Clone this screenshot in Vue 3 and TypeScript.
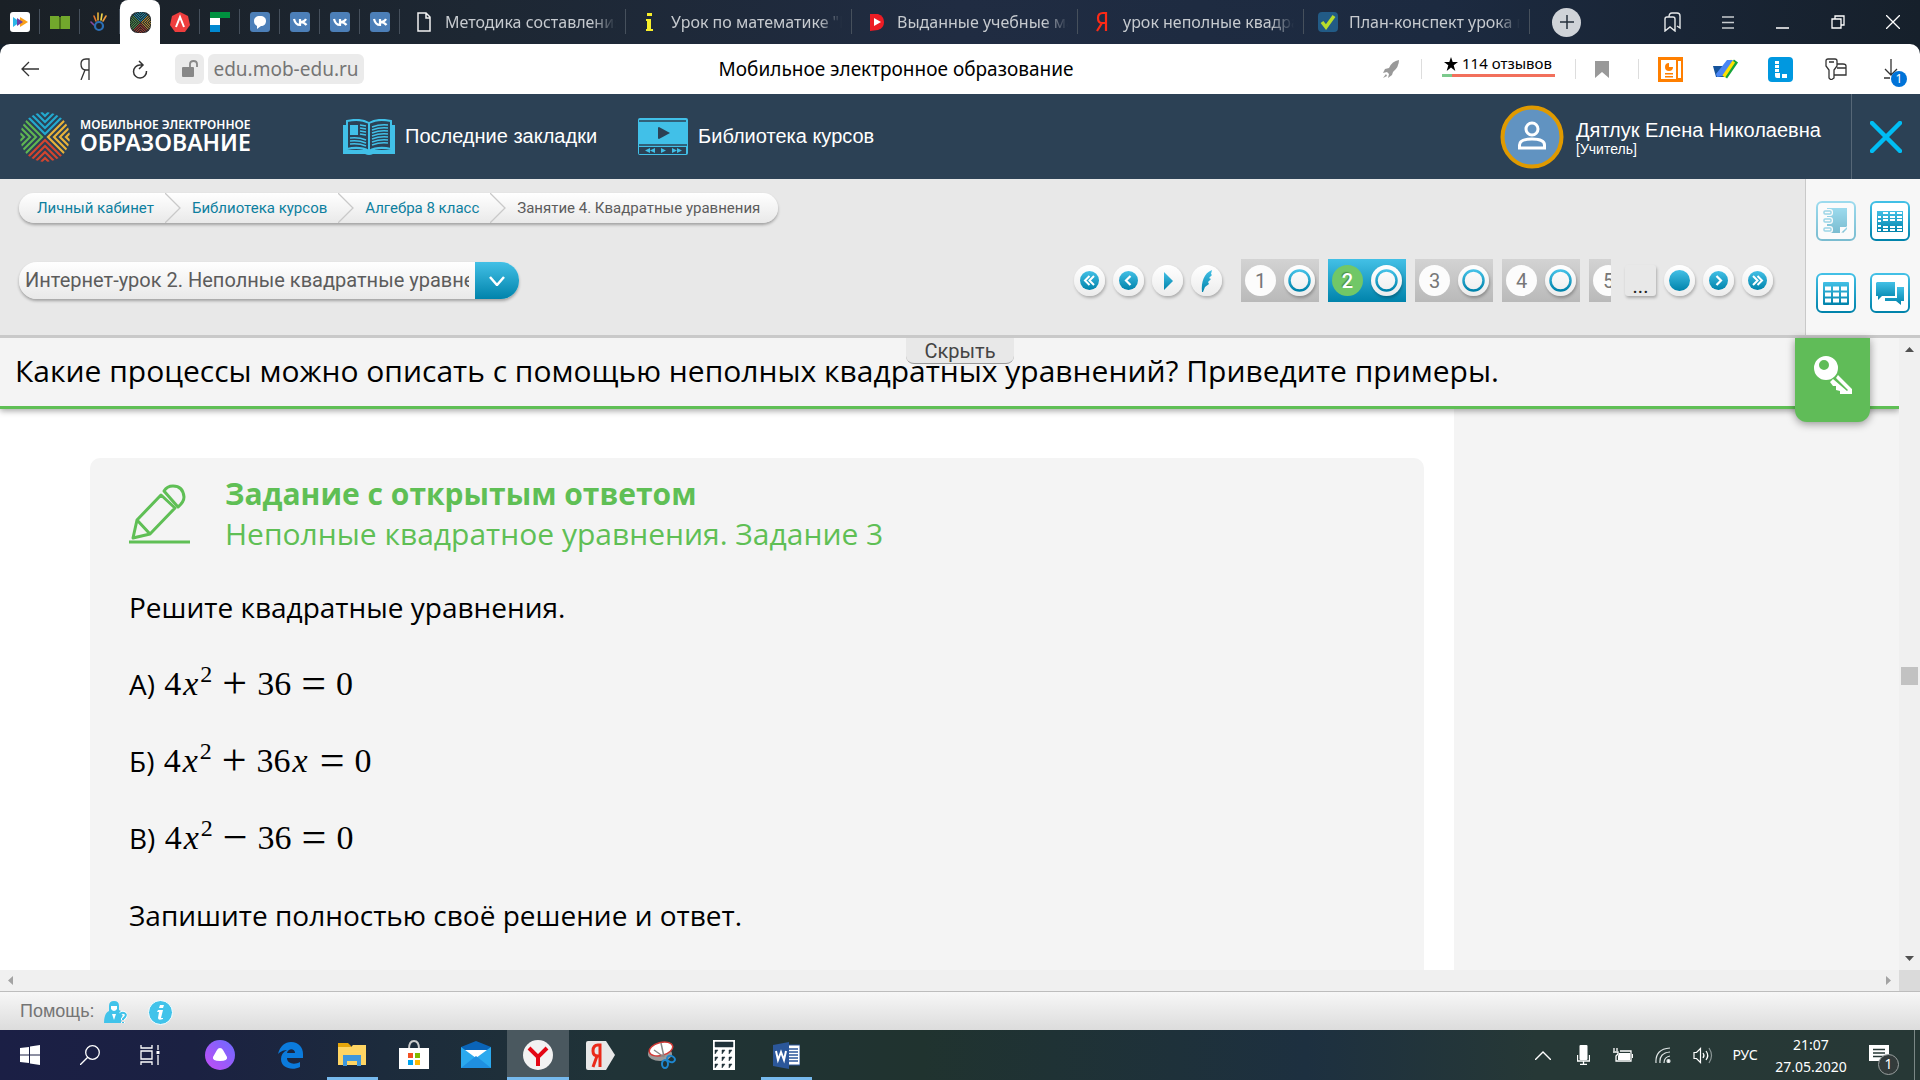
<script setup lang="ts">
import { ref } from 'vue'

interface Token {
  text: string
  kind: 'num' | 'var' | 'sup' | 'op'
}

interface Equation {
  label: string
  tokens: Token[]
}

const num = (text: string): Token => ({ text, kind: 'num' })
const variable = (text: string): Token => ({ text, kind: 'var' })
const sup = (text: string): Token => ({ text, kind: 'sup' })
const op = (text: string): Token => ({ text, kind: 'op' })

const equations: Equation[] = [
  { label: 'А)', tokens: [num('4'), variable('x'), sup('2'), op('+'), num('36'), op('='), num('0')] },
  { label: 'Б)', tokens: [num('4'), variable('x'), sup('2'), op('+'), num('36'), variable('x'), op('='), num('0')] },
  { label: 'В)', tokens: [num('4'), variable('x'), sup('2'), op('−'), num('36'), op('='), num('0')] },
]

const tabs = [
  { id: 'doc', title: 'Методика составления' },
  { id: 'info', title: 'Урок по математике "Неполные' },
  { id: 'video', title: 'Выданные учебные материалы' },
  { id: 'ya', title: 'урок неполные квадратные' },
  { id: 'check', title: 'План-конспект урока по теме' },
]

const crumbs = ['Личный кабинет', 'Библиотека курсов', 'Алгебра 8 класс']
const pages = [1, 2, 3, 4, 5]
const currentPage = ref(2)
const lesson = ref('2')
const rayApexes = [22, 16, 10, 4]
const logoSides = [
  { angle: 0, color: '#23a9cf' },
  { angle: 90, color: '#e8b23a' },
  { angle: 180, color: '#d3452f' },
  { angle: 270, color: '#5fb552' },
]
</script>

<template>
  <div class="screen">
    <svg class="defs" width="0" height="0" aria-hidden="true">
      <defs>
        <linearGradient id="blue" x1="0" y1="0" x2="0" y2="1">
          <stop offset="0" stop-color="#43c0e6" />
          <stop offset="1" stop-color="#0083ab" />
        </linearGradient>
        <linearGradient id="alice" x1="0" y1="1" x2="1" y2="0">
          <stop offset="0" stop-color="#c44df5" />
          <stop offset="1" stop-color="#6a6bff" />
        </linearGradient>
        <symbol id="emblem" viewBox="0 0 50 50">
          <clipPath id="emblem-clip"><circle cx="25" cy="25" r="25" /></clipPath>
          <g clip-path="url(#emblem-clip)" fill="none" stroke-width="2.2">
            <g v-for="side in logoSides" :key="side.angle" :stroke="side.color" :transform="`rotate(${side.angle} 25 25)`">
              <path v-for="apex in rayApexes" :key="apex" :d="`M${25 - apex} 0 L25 ${apex} L${25 + apex} 0`" />
            </g>
          </g>
        </symbol>
      </defs>
    </svg>

    <header class="tabs">
      <button class="pin" aria-label="Видео">
        <svg width="20" height="20" viewBox="0 0 20 20"><rect width="20" height="20" rx="3" fill="#fff" /><path d="M3 5l7 5-7 5z" fill="#29b6e8" /><path d="M10 5l8 5-8 5z" fill="#f9a01b" /><path d="M7 6l6 4-6 4z" fill="#6b3fa8" /></svg>
      </button>
      <button class="pin" aria-label="Учебник">
        <svg width="20" height="20" viewBox="0 0 20 20"><path d="M0 4h9v13H0zM11 4h9v13h-9z" fill="#72a82c" /><path d="M9 5h2v12H9z" fill="#4c7519" /></svg>
      </button>
      <button class="pin" aria-label="Рука">
        <svg width="20" height="20" viewBox="0 0 20 20" fill="none" stroke-width="1.600" stroke-linecap="round"><path d="M6 9L4 4" stroke="#e5762c" /><path d="M8 8V1" stroke="#e9b53b" /><path d="M11 8l1-6" stroke="#f2d64b" /><path d="M13 9l3-5" stroke="#ef9a3f" /><path d="M4 13l-3-3" stroke="#8a4a9d" /><ellipse cx="9" cy="14" rx="4" ry="4" stroke="#2c6fb5" stroke-width="2.200" /></svg>
      </button>
      <button class="pin active" aria-label="Мобильное электронное образование">
        <svg width="21" height="21" viewBox="0 0 50 50"><rect width="50" height="50" rx="18" fill="#20262b" /><use href="#emblem" width="50" height="50" /></svg>
      </button>
      <button class="pin" aria-label="А">
        <svg width="20" height="20" viewBox="0 0 20 20"><path d="M10 0l8 4 2 9-5 7H5l-5-7 2-9z" fill="#ee3d3d" /><path d="M6 15l4-10 4 10" fill="none" stroke="#fff" stroke-width="2" /></svg>
      </button>
      <button class="pin" aria-label="Портал">
        <svg width="20" height="20" viewBox="0 0 20 20"><path d="M0 0h20v6H0z" fill="#00923f" /><path d="M0 6h10v7H0z" fill="#fff" /><path d="M0 13h10v7H0z" fill="#0088d1" /></svg>
      </button>
      <button class="pin" aria-label="Сообщения">
        <svg width="20" height="20" viewBox="0 0 20 20"><rect width="20" height="20" rx="3" fill="#4c7fb8" /><path d="M10 4c4 0 6 2 6 5s-2 5-5 5l-4 3v-3c-2-1-3-3-3-5 0-3 2-5 6-5z" fill="#fff" /></svg>
      </button>
      <button v-for="n in 3" :key="n" class="pin" aria-label="ВКонтакте">
        <svg width="20" height="20" viewBox="0 0 20 20"><rect width="20" height="20" rx="3" fill="#4c7fb8" /><path d="M4 7c1 4 3 6 6 6V7M16 7c-1 2-3 3-6 3 3 0 5 1 6.500 3" fill="none" stroke="#fff" stroke-width="2.200" /></svg>
      </button>
      <button v-for="tab in tabs" :key="tab.id" class="tab">
        <svg width="22" height="22" viewBox="0 0 22 22">
          <template v-if="tab.id === 'doc'"><path d="M5 2h8l4 4v14H5zM13 2v5h4" fill="none" stroke="#f1f1f1" stroke-width="1.500" /></template>
          <template v-if="tab.id === 'info'"><path d="M8 2h5v3H8zM7 8h5v10h2v2H7v-2h1v-8H7z" fill="#f7ee2a" /></template>
          <template v-if="tab.id === 'video'"><path d="M5 3h8q6 2 6 8t-6 8l-8 1z" fill="#ed1c24" /><path d="M9 7l7 4-7 4z" fill="#fff" /></template>
          <template v-if="tab.id === 'ya'"><path d="M15 20V2h-3C8 2 7 4 7 7c0 4 2 5 4 5h4M11 12L6 20" fill="none" stroke="#fc2a16" stroke-width="2.200" /></template>
          <template v-if="tab.id === 'check'"><rect x="1" y="1" width="20" height="20" rx="4" fill="#225b86" /><path d="M5 11l4 5 8-11" fill="none" stroke="#b8dc2b" stroke-width="3.500" /></template>
        </svg>
        <span>{{ tab.title }}</span>
      </button>
      <div class="plus-cell">
        <button class="plus" aria-label="Новая вкладка"><svg width="14" height="14" viewBox="0 0 14 14"><path d="M7 0v14M0 7h14" stroke="#26303b" stroke-width="1.500" /></svg></button>
      </div>
      <div class="window-controls">
        <button aria-label="Закладки"><svg width="18" height="20" viewBox="0 0 18 20" fill="none" stroke="#e6e8ea" stroke-width="1.400"><path d="M1 7q0-2 2-2h6q2 0 2 2v12l-5-4-5 4zM5 5q0-4 3-4h5q3 0 3 3v12l-3-2" /></svg></button>
        <button aria-label="Меню"><svg width="12" height="13" viewBox="0 0 12 13"><path d="M0 1h12M0 6.500h12M0 12h12" stroke="#c8ccd0" stroke-width="1.500" /></svg></button>
        <button aria-label="Свернуть"><svg width="13" height="14" viewBox="0 0 13 14"><path d="M0 13h13" stroke="#fff" stroke-width="1.500" /></svg></button>
        <button aria-label="Окно"><svg width="14" height="14" viewBox="0 0 14 14" fill="none" stroke="#fff" stroke-width="1.300"><path d="M1 4h9v9H1zM4 4V1h9v9h-3" /></svg></button>
        <button aria-label="Закрыть"><svg width="14" height="14" viewBox="0 0 14 14"><path d="M0 0l14 14M14 0L0 14" stroke="#fff" stroke-width="1.300" /></svg></button>
      </div>
    </header>

    <div class="address">
      <div class="bar">
        <button class="nav" aria-label="Назад"><svg width="18" height="16" viewBox="0 0 18 16" fill="none" stroke="#333" stroke-width="1.300"><path d="M18 8H1M8 1L1 8l7 7" /></svg></button>
        <button class="nav" aria-label="Яндекс"><svg width="10" height="22" viewBox="0 0 10 22" fill="none" stroke="#333" stroke-width="1.300"><path d="M9 22V1H6C2 1 1 3 1 6s1 6 5 6h3M5 12L1 22" /></svg></button>
        <button class="nav" aria-label="Обновить"><svg width="16" height="19" viewBox="0 0 16 19" fill="none" stroke="#333" stroke-width="1.500"><path d="M14.500 11A6.500 6.500 0 1 1 8 5h3M7 1l4 4-4 4" /></svg></button>
        <button class="lock" aria-label="Соединение"><svg width="18" height="18" viewBox="0 0 18 18"><rect x="1" y="7" width="12" height="10" rx="1" fill="#888" /><path d="M9 8V4q0-3 3.500-3T16 4v3" fill="none" stroke="#888" stroke-width="1.800" /></svg></button>
        <button class="url">edu.mob-edu.ru</button>
        <div class="page-title">Мобильное электронное образование</div>
        <button class="rocket" aria-label="Турбо"><svg width="16" height="18" viewBox="0 0 16 18" fill="#999"><path d="M16 0q-7 1-10 8L2 9l-2 4 4-1 2 2-1 4 4-3 1-3q6-5 6-12zM3 14l-3 4 4-2z" /></svg></button>
        <a class="reviews" href="#"><svg width="14" height="14" viewBox="0 0 14 14"><path d="M7 0l1.700 5H14L9.700 8.200 11.300 14 7 10.600 2.700 14l1.600-5.800L0 5h5.300z" /></svg><span>114 отзывов</span></a>
        <button class="mark" aria-label="В закладки"><svg width="14" height="17" viewBox="0 0 14 17"><path d="M0 0h14v17l-7-6-7 6z" fill="#999" /></svg></button>
        <div class="extensions">
          <button aria-label="Презентация"><svg width="25" height="25" viewBox="0 0 25 25"><rect width="25" height="25" fill="#ff7f00" /><path d="M3 3h15v19H3zM20 4h3v17h-3z" fill="#fff" /><path d="M11 6a4 4 0 1 0 4 4h-4zM7 16h8v1.500H7zM7 19h8v1.500H7z" fill="#ff7f00" /></svg></button>
          <button aria-label="Кисть"><svg width="26" height="20" viewBox="0 0 26 20"><path d="M0 7h12v11H3z" fill="#15539b" /><path d="M23 2L12 18" stroke="#16a43a" stroke-width="5" /><path d="M20 2L10 17" stroke="#ffe100" stroke-width="5" /><path d="M14 1h6L9 17l-5 1-1-3z" fill="#4a86f5" /></svg></button>
          <button aria-label="Линко"><svg width="25" height="25" viewBox="0 0 25 25"><rect width="25" height="25" rx="4" fill="#0098e0" /><path d="M7 4h4v3H7zM7 8h4v3H7zM7 12h4v3H7zM7 16h5v5H9q-2 0-2-2zM14 17h5v4h-5z" fill="#fff" /></svg></button>
          <button aria-label="Пароли"><svg width="22" height="22" viewBox="0 0 22 22" fill="none" stroke="#333" stroke-width="1.300"><path d="M1 3q0-2 2-2h7q2 0 2 2v5L9 12v8l-3 2-2-2v-8L1 8zM4 4h5M12 6h6q3 0 3 2v9H9M12 10h9" /></svg></button>
          <button class="download" aria-label="Загрузки"><svg width="16" height="20" viewBox="0 0 16 20" fill="none" stroke="#333" stroke-width="1.300"><path d="M8 0v16M2 10l6 6 6-6M1 19h6" /></svg><span class="badge">1</span></button>
        </div>
      </div>
    </div>

    <div class="site-head">
      <a class="logo" href="#">
        <svg width="50" height="50" viewBox="0 0 50 50"><use href="#emblem" width="50" height="50" /></svg>
        <span class="logo-text"><small>МОБИЛЬНОЕ ЭЛЕКТРОННОЕ</small><strong>ОБРАЗОВАНИЕ</strong></span>
      </a>
      <a class="head-link" href="#">
        <svg width="52" height="36" viewBox="0 0 52 36"><path d="M0 6h3v25h46V6h3v29H30q-4 2-8 0H0z" fill="#41c0e8" /><path d="M4 2Q17-1 26 4q9-5 22-2v28q-13-3-22 2-9-5-22-2z" fill="#2c4155" stroke="#41c0e8" stroke-width="2" /><path d="M26 4v28" stroke="#41c0e8" stroke-width="2" /><path d="M7 6h8v10H7z" fill="#41c0e8" /><path d="M17 6l6 1M17 9l6 1M17 12l6 1M17 15l6 1M7 19q9-1 16 2M7 22q9-1 16 2M7 25q9-1 16 2M29 8q8-3 16-2M29 11q8-3 16-2M29 14q8-3 16-2M29 17q8-3 16-2M29 20q8-3 16-2M29 23q8-3 16-2M29 26q8-3 16-2" fill="none" stroke="#41c0e8" stroke-width="1.400" /></svg>
        <span>Последние закладки</span>
      </a>
      <a class="head-link library" href="#">
        <svg width="50" height="37" viewBox="0 0 50 37"><rect width="50" height="37" rx="2" fill="#41c0e8" /><path d="M1 3h47M1 27h48" stroke="#2c4155" stroke-width="1.500" /><path d="M20 10q0-1 1-1l11 6-11 6q-1 0-1-1z" fill="#2c4155" /><rect x="1" y="29" width="47" height="7" fill="#2c4155" /><path d="M12 30v5l-5-2.500zM17 30v5l-5-2.500zM23 30v5l5-2.500zM34 30v5l5-2.500zM39 30v5l5-2.500z" fill="#41c0e8" /></svg>
        <span>Библиотека курсов</span>
      </a>
      <div class="user">
        <svg width="64" height="64" viewBox="0 0 64 64"><circle cx="32" cy="32" r="29.500" fill="#6193c1" stroke="#e09a00" stroke-width="4" /><g fill="none" stroke="#fff" stroke-width="3"><circle cx="32" cy="24" r="6" /><path d="M19.500 43v-3q0-6 12.500-6t12.500 6v3z" /></g></svg>
        <div class="user-text"><div class="user-name">Дятлук Елена Николаевна</div><div class="user-role">[Учитель]</div></div>
      </div>
      <button class="site-close" aria-label="Выйти"><svg width="32" height="32" viewBox="0 0 32 32"><path d="M2 2l28 28M30 2L2 30" stroke="#00bdf4" stroke-width="4.500" stroke-linecap="round" /></svg></button>
    </div>

    <div class="tools">
      <div class="tools-main">
        <nav class="crumbs">
          <template v-for="crumb in crumbs" :key="crumb">
            <a href="#">{{ crumb }}</a>
            <svg width="16" height="30" viewBox="0 0 16 30"><path d="M0 0l15 15L0 30" fill="none" stroke="#c9c9c9" stroke-width="1.300" /></svg>
          </template>
          <span>Занятие 4. Квадратные уравнения</span>
        </nav>
        <div class="tools-row">
          <div class="lesson">
            <select v-model="lesson" aria-label="Интернет-урок">
              <option value="2">Интернет-урок 2. Неполные квадратные уравнения</option>
            </select>
            <span class="lesson-arrow"><svg width="16" height="10" viewBox="0 0 16 10"><path d="M1 1l7 8 7-8" fill="none" stroke="#fff" stroke-width="2.500" /></svg></span>
          </div>
          <div class="pager">
            <button class="round" aria-label="В начало"><svg width="19" height="19" viewBox="0 0 19 19"><circle cx="9.500" cy="9.500" r="9.500" fill="url(#blue)" /><path d="M9.500 5L5 9.500l4.500 4.500M14 5L9.500 9.500 14 14" fill="none" stroke="#fff" stroke-width="2" /></svg></button>
            <button class="round" aria-label="Назад"><svg width="19" height="19" viewBox="0 0 19 19"><circle cx="9.500" cy="9.500" r="9.500" fill="url(#blue)" /><path d="M11.500 5L7 9.500l4.500 4.500" fill="none" stroke="#fff" stroke-width="2.200" /></svg></button>
            <button class="round" aria-label="Пуск"><svg width="10" height="18" viewBox="0 0 10 18"><path d="M1 0l9 9-9 9z" fill="url(#blue)" /></svg></button>
            <button class="round" aria-label="Перо"><svg width="12" height="22" viewBox="0 0 12 22"><path d="M11 0l-1 4 1 1-3 3 2 1-3 3 1 2-4 3-2 5H1C0 12 3 3 11 0z" fill="url(#blue)" /></svg></button>
            <div class="pages">
              <div v-for="page in pages" :key="page" class="page" :class="{ current: page === currentPage }">
                <button class="number" @click="currentPage = page">{{ page }}</button>
                <button class="round ring" :aria-label="`Блок ${page}`"><svg width="23" height="23" viewBox="0 0 23 23"><circle cx="11.500" cy="11.500" r="10" fill="none" stroke="url(#blue)" stroke-width="2.500" /></svg></button>
              </div>
            </div>
            <button class="more">...</button>
            <button class="round" aria-label="Текущий"><svg width="21" height="21" viewBox="0 0 21 21"><circle cx="10.500" cy="10.500" r="10.500" fill="url(#blue)" /></svg></button>
            <button class="round" aria-label="Вперёд"><svg width="19" height="19" viewBox="0 0 19 19"><circle cx="9.500" cy="9.500" r="9.500" fill="url(#blue)" /><path d="M7.500 5l4.500 4.500L7.500 14" fill="none" stroke="#fff" stroke-width="2.200" /></svg></button>
            <button class="round" aria-label="В конец"><svg width="19" height="19" viewBox="0 0 19 19"><circle cx="9.500" cy="9.500" r="9.500" fill="url(#blue)" /><path d="M5 5l4.500 4.500L5 14M9.500 5l4.500 4.500L9.500 14" fill="none" stroke="#fff" stroke-width="2" /></svg></button>
          </div>
        </div>
      </div>
      <aside class="side">
        <button class="faded" aria-label="Тетрадь"><svg width="40" height="40" viewBox="0 0 40 40"><rect x="1" y="1" width="38" height="38" rx="5" fill="#fff" stroke="url(#blue)" stroke-width="2" /><path d="M11 7h20v18l-6 7H11z" fill="url(#blue)" /><g fill="#fff" stroke="#fff" stroke-width="2"><rect x="7" y="9" width="9" height="5" rx="2" /><rect x="7" y="17" width="9" height="5" rx="2" /><rect x="7" y="26" width="9" height="5" rx="2" /></g><g fill="#fff" stroke="#43b5d8" stroke-width="1.500"><rect x="8" y="10" width="7" height="3" rx="1" /><rect x="8" y="18" width="7" height="3" rx="1" /><rect x="8" y="27" width="7" height="3" rx="1" /></g><path d="M24 33v-7h7z" fill="#fff" /><path d="M26 31l5-5v2l-4 4z" fill="url(#blue)" /></svg></button>
        <button aria-label="Журнал"><svg width="40" height="40" viewBox="0 0 40 40"><rect x="1" y="1" width="38" height="38" rx="5" fill="#fff" stroke="url(#blue)" stroke-width="2" /><path d="M7 10h26v21H7z" fill="url(#blue)" /><path d="M13 12h5M20 12h5M27 12h5M13 16h5M20 16h5M27 16h5M8 16h3M13 19h5M20 19h5M27 19h5M8 20h3M8 25h3M13 26h5M20 26h5M27 26h5M8 29h3M13 29h5M20 29h5M27 29h5" stroke="#fff" stroke-width="2" /></svg></button>
        <button aria-label="Расписание"><svg width="40" height="40" viewBox="0 0 40 40"><rect x="1" y="1" width="38" height="38" rx="5" fill="#fff" stroke="url(#blue)" stroke-width="2" /><rect x="7" y="9" width="26" height="23" rx="1" fill="url(#blue)" /><path d="M9 15.500h6M17 15.500h6M25 15.500h6M9 21.500h6M17 21.500h6M25 21.500h6M9 27.500h6M17 27.500h6M25 27.500h6" stroke="#fff" stroke-width="4" /></svg></button>
        <button aria-label="Чат"><svg width="40" height="40" viewBox="0 0 40 40"><rect x="1" y="1" width="38" height="38" rx="5" fill="#fff" stroke="url(#blue)" stroke-width="2" /><path d="M7 9h18v14H12l-4 4v-4H6V10z" fill="url(#blue)" /><path d="M27 14h7v14h-3v4l-5-4H15v-3h12z" fill="url(#blue)" /></svg></button>
      </aside>
    </div>

    <main class="workspace">
      <div class="view">
        <div class="question">Какие процессы можно описать с помощью неполных квадратных уравнений? Приведите примеры.</div>
        <div class="scroll-body">
          <div class="sheet">
            <section class="task">
              <div class="task-head">
                <svg width="62" height="62" viewBox="0 0 62 62" fill="none" stroke="#5fbf55" stroke-width="3" stroke-linejoin="round"><path d="M0 59h61" /><path d="M32 12l14 13-25 26-17 4 4-18zM8 37l13 14" /><path d="M35 8q3-5 9-5 10 0 11 11 0 5-6 10z" /></svg>
                <h2><b>Задание с открытым ответом</b><span>Неполные квадратное уравнения. Задание 3</span></h2>
              </div>
              <p>Решите квадратные уравнения.</p>
              <p v-for="eq in equations" :key="eq.label">{{ eq.label }} <span class="math"><span v-for="(token, i) in eq.tokens" :key="i" :class="token.kind">{{ token.text }}</span></span></p>
              <p>Запишите полностью своё решение и ответ.</p>
            </section>
          </div>
        </div>
      </div>
      <div class="v-scroll">
        <svg width="9" height="5" viewBox="0 0 9 5"><path d="M0 5l4.500-5L9 5z" fill="#505050" /></svg>
        <div class="track"><div class="thumb"></div></div>
        <svg width="9" height="5" viewBox="0 0 9 5"><path d="M0 0l4.500 5L9 0z" fill="#505050" /></svg>
      </div>
      <button class="hide">Скрыть</button>
      <button class="key" aria-label="Ключ"><svg width="40" height="40" viewBox="0 0 40 40"><path d="M13 1a12 12 0 1 0 0 24 12 12 0 0 0 0-24zM11 5a5 5 0 1 1 0 10 5 5 0 0 1 0-10z" fill="#fff" fill-rule="evenodd" /><path d="M25 20l14 14v5H27v-3l-4-1v-4h-3l-3-4 3-3 14 12 1-1-12-12z" fill="#fff" /></svg></button>
    </main>

    <div class="h-scroll">
      <svg width="5" height="9" viewBox="0 0 5 9"><path d="M5 0L0 4.500 5 9z" fill="#a3a3a3" /></svg>
      <svg class="to-right" width="5" height="9" viewBox="0 0 5 9"><path d="M0 0l5 4.500L0 9z" fill="#a3a3a3" /></svg>
      <div class="corner"></div>
    </div>

    <footer class="help">
      <span>Помощь:</span>
      <a href="#" aria-label="Поддержка"><svg width="24" height="25" viewBox="0 0 24 25"><path d="M5 10V6q0-5 5-5t5 5v4q3 1 4 3l-2 10H0q0-10 5-12z" fill="#41c3ea" /><path d="M7 6h6v3q-3 4-6 0zM8 14h4l-2 6z" fill="#fff" /><path d="M17 14q1-2 3-1t1 4l-2 2v1m0 2v1" fill="none" stroke="#fff" stroke-width="4" /><path d="M16 15q1-3 4-2t1 4l-2 2v1m0 2v1" fill="none" stroke="#41c3ea" stroke-width="2" /></svg></a>
      <a href="#" aria-label="Справка"><svg width="25" height="25" viewBox="0 0 25 25"><circle cx="12.500" cy="12.500" r="12" fill="#41c3ea" stroke="#fff" /><path d="M12 5h4l-1 3h-4zM10 10h5l-2 8h2v1q-5 2-5-1l1-6h-2z" fill="#fff" /></svg></a>
    </footer>

    <div class="taskbar">
      <button class="sys" aria-label="Пуск"><svg width="20" height="20" viewBox="0 0 20 20" fill="#fff"><path d="M0 3l9-1v7.500H0zM10 1.500L20 0v9.500H10zM0 10.500h9V18l-9-1zM10 10.500h10V20l-10-1.500z" /></svg></button>
      <button class="sys" aria-label="Поиск"><svg width="20" height="20" viewBox="0 0 20 20" fill="none" stroke="#fff" stroke-width="1.300"><circle cx="12.500" cy="7.500" r="6.800" /><path d="M8 12l-8 8" /></svg></button>
      <button class="sys" aria-label="Представление задач"><svg width="20" height="20" viewBox="0 0 20 20" fill="none" stroke="#fff" stroke-width="1.300"><path d="M1 0v3h11V0M1 20v-3h11v3M1 6h11v8H1zM18 0v5M18 10v10" /><path d="M18 6v3" stroke-width="3" /></svg></button>
      <button class="sys wide" aria-label="Алиса"><svg width="30" height="30" viewBox="0 0 30 30"><circle cx="15" cy="15" r="15" fill="url(#alice)" /><path d="M15 8q2 0 3 2l4 7q1 4-7 4t-7-4l4-7q1-2 3-2z" fill="#fff" /></svg></button>
      <button class="app" aria-label="Edge"><svg width="25" height="27" viewBox="0 0 25 27"><path d="M0 12C2 4 7 0 13 0c8 0 12 6 12 12v4H9c0 6 8 7 13 4v5c-8 4-19 1-19-8 0-4 2-7 6-9-5 0-8 3-9 4zM9 11h8c0-5-7-5-8 0z" fill="#0b7bdc" /></svg></button>
      <button class="app open" aria-label="Проводник"><svg width="28" height="24" viewBox="0 0 28 24"><path d="M0 0h10l3 3v4H0z" fill="#e5a50a" /><path d="M0 4h13l2-2h13v20H0z" fill="#ffd563" /><path d="M5 23V12h18v11h-4v-5h-10v5z" fill="#3e97dd" /></svg></button>
      <button class="app" aria-label="Магазин"><svg width="30" height="30" viewBox="0 0 30 30"><path d="M10 9q0-8 5-8t5 8" fill="none" stroke="#ccc" stroke-width="2" /><path d="M0 8h30v21H0z" fill="#fff" /><path d="M9 13h5v5H9z" fill="#f25022" /><path d="M16 13h5v5h-5z" fill="#7fba00" /><path d="M9 20h5v5H9z" fill="#00a4ef" /><path d="M16 20h5v5h-5z" fill="#ffb900" /></svg></button>
      <button class="app" aria-label="Почта"><svg width="30" height="28" viewBox="0 0 30 28"><path d="M0 6l15-6 15 6v21H0z" fill="#0a64b8" /><path d="M3 9h24v9H3z" fill="#fff" /><path d="M0 6l15 11L30 6v21H0z" fill="#2ba9ee" /><path d="M0 27l15-12 15 12z" fill="#1f8fe0" /></svg></button>
      <button class="app open selected" aria-label="Яндекс Браузер"><svg width="30" height="30" viewBox="0 0 30 30"><circle cx="15" cy="15" r="15" fill="#f2f2f2" /><path d="M6 8l9 9 9-9M15 16v10" fill="none" stroke="#e30613" stroke-width="4" /></svg></button>
      <button class="app" aria-label="Яндекс"><svg width="29" height="29" viewBox="0 0 29 29"><path d="M2 0h18l9 14-9 15H2q-2 0-2-2V2q0-2 2-2z" fill="#e8e8e8" /><path d="M14 26V4h-2c-4 0-5 3-5 6 0 4 2 5 5 5h2M11 15L7 26" fill="none" stroke="#ea2a1a" stroke-width="3" /></svg></button>
      <button class="app" aria-label="Ножницы"><svg width="28" height="28" viewBox="0 0 28 28"><ellipse cx="12" cy="13" rx="12" ry="7" fill="#999" /><ellipse cx="13" cy="8" rx="12" ry="6.500" transform="rotate(-15 13 8)" fill="#fff" stroke="#d23a36" stroke-width="1.500" /><path d="M13 2l3 14M6 9l10 7" stroke="#888" stroke-width="1.500" /><g fill="none" stroke="#1e87d0" stroke-width="2"><ellipse cx="23" cy="18" rx="4" ry="3" transform="rotate(20 23 18)" /><ellipse cx="17" cy="23" rx="3" ry="4" /></g></svg></button>
      <button class="app" aria-label="Калькулятор"><svg width="22" height="30" viewBox="0 0 22 30"><path d="M0 0h22v30H0z" fill="#fff" /><path d="M2 2h18v5H2zM2 10h3l-3 4zM9 10h3l-3 4zM16 10h3l-3 4zM2 17h3l-3 4zM9 17h3l-3 4zM16 17h3l-3 4zM2 24h3l-3 4zM9 24h3l-3 4zM16 24h3l-3 4z" fill="#20323a" stroke="#20323a" stroke-width=".500" /></svg></button>
      <button class="app open" aria-label="Word"><svg width="27" height="27" viewBox="0 0 27 27"><path d="M13 3h14v20H13z" fill="#fff" stroke="#2b579a" /><path d="M16 7h9M16 10h9M16 13h9M16 16h9M16 19h9" stroke="#2b579a" stroke-width="1.500" /><path d="M0 3l16-3v27L0 24z" fill="#2b579a" /><path d="M3 9l2 9 3-8 3 8 2-9" fill="none" stroke="#fff" stroke-width="2" /></svg></button>
      <div class="tray">
        <button aria-label="Скрытые значки"><svg width="16" height="9" viewBox="0 0 16 9"><path d="M0 9l8-8 8 8" fill="none" stroke="#fff" stroke-width="1.400" /></svg></button>
        <button aria-label="Микрофон"><svg width="13" height="20" viewBox="0 0 13 20"><rect x="2.500" width="8" height="15" rx="1" fill="#fff" /><path d="M.500 10v6h12v-6M6.500 16v3M3 19.300h7" fill="none" stroke="#fff" stroke-width="1.300" /></svg></button>
        <button aria-label="Батарея"><svg width="20" height="14" viewBox="0 0 20 14"><path d="M1 0v3M4 0v3M0 4h5v2L3 8v5h15V3H7" fill="none" stroke="#fff" stroke-width="1.300" /><path d="M6 5h11v7H5V8zM19 6h1v4h-1z" fill="#fff" /></svg></button>
        <button aria-label="Сеть"><svg width="16" height="16" viewBox="0 0 16 16" fill="none" stroke="#dfe5e5" stroke-width="1.200"><path d="M1 16Q0 2 15 1M5 16Q4 6 15 5M9 16q0-6 6-7" /><circle cx="13.500" cy="14" r="1.500" fill="#fff" /></svg></button>
        <button aria-label="Звук"><svg width="20" height="17" viewBox="0 0 20 17" fill="none" stroke="#fff" stroke-width="1.200"><path d="M1 5.500h2.500l4-4v14l-4-4H1zM10 6q2 2.500 0 5M13 4q3.500 4.500 0 9" /><path d="M16 1q5 7.500 0 15" stroke="#8b9696" /></svg></button>
        <button class="lang">РУС</button>
        <button class="clock"><span>21:07</span><span>27.05.2020</span></button>
        <button class="notice" aria-label="Уведомления"><svg width="20" height="20" viewBox="0 0 20 20"><path d="M0 0h20v16h-6l-4 4v-4H0z" fill="#fff" /><path d="M4 4.500h12M4 8h12M4 11.500h12" stroke="#273836" stroke-width="1.300" /></svg><span class="notice-badge">1</span></button>
        <div class="desktop-edge"></div>
      </div>
    </div>
  </div>
</template>

<style>
body {
  margin: 0;
}
</style>

<style scoped>
.screen {
  display: flex;
  flex-direction: column;
  height: 100vh;
  overflow: hidden;
  font-family: "Liberation Sans", Arial, sans-serif;
  color: #000;
}
.screen * {
  box-sizing: border-box;
}
.defs {
  position: absolute;
}
button {
  display: flex;
  align-items: center;
  justify-content: center;
  flex: none;
  padding: 0;
  border: 0;
  background: none;
  color: inherit;
  font: inherit;
}
svg {
  display: block;
  flex: none;
}
a {
  text-decoration: none;
  color: inherit;
}

.tabs {
  display: flex;
  flex: none;
  height: 44px;
  background: linear-gradient(90deg, #1a2026 0%, #1d2733 25%, #202c42 50%, #1c2a40 75%, #16202b 100%);
}
.pin {
  position: relative;
  width: 40px;
}
.pin::after,
.tab::after {
  content: "";
  position: absolute;
  right: 0;
  top: 9px;
  height: 25px;
  border-right: 1px solid #46505c;
}
.pin.active {
  border-radius: 8px 8px 0 0;
  background: #fff;
}
.pin.active::after {
  display: none;
}
.tab {
  position: relative;
  flex: 0 1 226px;
  justify-content: flex-start;
  gap: 10px;
  min-width: 0;
  padding: 0 10px 0 13px;
  color: #c6cacf;
  font: 16px/22px "Noto Sans", sans-serif;
}
.tab span {
  flex: 1;
  overflow: hidden;
  text-align: left;
  white-space: nowrap;
  mask-image: linear-gradient(90deg, #000 86%, transparent);
}
.plus-cell {
  display: flex;
  flex: 1;
  align-items: center;
  padding-left: 22px;
}
.plus {
  width: 29px;
  height: 29px;
  border-radius: 50%;
  background: #cfd3d8;
}
.window-controls {
  display: flex;
}
.window-controls button {
  width: 55px;
}

.address {
  flex: none;
  height: 50px;
  background: #16202b;
}
.bar {
  display: flex;
  align-items: center;
  height: 50px;
  padding: 0 2px;
  border-radius: 10px 10px 0 0;
  background: #fff;
}
.nav {
  width: 55px;
  height: 50px;
}
.lock {
  width: 29px;
  height: 30px;
  margin: 0 4px 0 8px;
  border-radius: 6px;
  background: #ebebeb;
}
.url {
  width: 156px;
  height: 30px;
  border-radius: 6px;
  background: #ebebeb;
  color: #757575;
  font: 19px/30px "Noto Sans", sans-serif;
}
.page-title {
  flex: 1;
  padding-left: 62px;
  font: 19px/32px "Noto Sans", sans-serif;
  text-align: center;
  white-space: nowrap;
}
.rocket {
  width: 56px;
  height: 20px;
  padding-right: 6px;
  border-right: 1px solid #ddd;
}
.reviews {
  display: flex;
  align-items: center;
  width: 113px;
  margin: 0 20px 8px;
  gap: 4px;
  padding-left: 2px;
  border-bottom: 3px solid;
  border-image: linear-gradient(90deg, #7bc98c 10%, #f2705c 10%) 1;
  font: 15px/21px "Noto Sans", sans-serif;
  white-space: nowrap;
}
.mark {
  width: 64px;
  height: 20px;
  padding-right: 10px;
  border: solid #ddd;
  border-width: 0 1px;
}
.extensions {
  display: flex;
  margin-left: 4px;
}
.extensions button {
  position: relative;
  width: 55px;
  height: 30px;
}
.badge {
  position: absolute;
  right: 11px;
  bottom: -3px;
  width: 16px;
  height: 16px;
  border-radius: 50%;
  background: #0073d8;
  color: #fff;
  font: 12px/16px "Noto Sans", sans-serif;
}

.site-head {
  display: flex;
  flex: none;
  align-items: center;
  height: 85px;
  padding-left: 20px;
  background: #2c4155;
  color: #fff;
  font-size: 20px;
}
.logo {
  display: flex;
  flex: none;
  gap: 10px;
  width: 323px;
}
.logo-text {
  display: flex;
  flex-direction: column;
  padding-top: 6px;
  font-family: "Noto Sans", sans-serif;
  white-space: nowrap;
}
.logo-text small {
  font-size: 12px;
  font-weight: 600;
  line-height: 14px;
}
.logo-text strong {
  font-size: 23px;
  font-weight: 600;
  line-height: 20px;
}
.head-link {
  display: flex;
  align-items: center;
  gap: 10px;
  white-space: nowrap;
}
.library {
  margin-left: 41px;
}
.user {
  display: flex;
  flex: none;
  align-items: center;
  gap: 12px;
  margin-left: auto;
  padding-right: 26px;
}
.user-text {
  min-width: 249px;
}
.user-name {
  line-height: 24px;
}
.user-role {
  font-size: 14px;
  line-height: 14px;
}
.site-close {
  width: 69px;
  height: 85px;
  border-left: 1px solid #566777;
}

.tools {
  display: flex;
  flex: none;
  height: 159px;
  border-bottom: 3px solid #c9c9c9;
  background: #e8e8e8;
}
.tools-main {
  display: flex;
  flex: 1;
  flex-direction: column;
  align-items: flex-start;
  min-width: 0;
  padding: 14px 32px 0 19px;
}
.crumbs {
  display: flex;
  align-items: center;
  height: 30px;
  padding: 0 18px;
  gap: 11px;
  border-radius: 15px;
  background: linear-gradient(#fff, #e9e9e9);
  box-shadow: 0 2px 3px rgba(0, 0, 0, 0.3);
  color: #5c5c5c;
  font: 15px/30px Roboto, sans-serif;
  white-space: nowrap;
}
.crumbs a {
  color: #0d7f9f;
}
.tools-row {
  display: flex;
  align-items: center;
  justify-content: space-between;
  align-self: stretch;
  margin-top: 36px;
}
.lesson {
  display: flex;
  flex: none;
  width: 500px;
  height: 37px;
  overflow: hidden;
  border-radius: 18px;
  background: linear-gradient(#fff, #e9e9e9);
  box-shadow: 0 2px 3px rgba(0, 0, 0, 0.3);
}
.lesson select {
  flex: 1;
  min-width: 0;
  margin: 0 6px;
  padding: 0;
  border: 0;
  outline: 0;
  appearance: none;
  background: none;
  color: #5c5c5c;
  font: 20px/37px Roboto, sans-serif;
}
.lesson-arrow {
  display: flex;
  align-items: center;
  justify-content: center;
  width: 44px;
  background: linear-gradient(#43c0e6, #0083ab);
}
.pager {
  display: flex;
  align-items: center;
  gap: 8px;
}
.round {
  width: 31px;
  height: 31px;
  border-radius: 50%;
  background: linear-gradient(#fff, #ececec);
  box-shadow: 1px 2px 3px rgba(0, 0, 0, 0.25);
}
.pages {
  display: flex;
  flex: none;
  width: 370px;
  gap: 9px;
  margin: 0 6px 0 11px;
  overflow: hidden;
}
.page {
  display: flex;
  flex: none;
  align-items: center;
  width: 78px;
  height: 43px;
  padding: 0 4px;
  gap: 8px;
  background: linear-gradient(#d3d3d3, #b9b9b9);
}
.page.current {
  background: linear-gradient(#43c0e6, #0083ab);
}
.number {
  width: 31px;
  height: 31px;
  border-radius: 50%;
  background: #fcfcfc;
  color: #777;
  font: 20px/30px Roboto, sans-serif;
}
.current .number {
  background: #71c767;
  color: #fff;
  font-weight: 500;
  text-shadow: -1px -1px 1px #4d8c46;
}
.more {
  align-items: flex-end;
  width: 31px;
  height: 31px;
  border-radius: 3px;
  background: #e8e8e8;
  box-shadow: 1px 2px 3px rgba(0, 0, 0, 0.25);
  color: #222;
  font: 20px/20px Roboto, sans-serif;
}
.side {
  display: grid;
  flex: none;
  grid-template-columns: 40px 40px;
  gap: 32px 14px;
  align-content: start;
  width: 115px;
  padding: 22px 10px;
  border-left: 1px solid #c9c9c9;
  background: #f7f7f7;
}
.faded {
  opacity: 0.5;
}

.workspace {
  position: relative;
  display: flex;
  flex: 1;
  min-height: 0;
}
.view {
  display: flex;
  flex: 1;
  flex-direction: column;
  min-width: 0;
  overflow: hidden;
  background: #f4f4f4;
}
.question {
  position: relative;
  flex: none;
  height: 71px;
  padding-left: 15px;
  border-bottom: 3px solid #5fbf55;
  background: #f4f4f4;
  box-shadow: 0 2px 6px rgba(0, 0, 0, 0.35);
  font: 30px/66px "Open Sans", sans-serif;
  white-space: nowrap;
}
.scroll-body {
  flex: 1;
  min-height: 0;
  padding-right: 445px;
}
.sheet {
  height: 100%;
  padding: 49px 30px 0 90px;
  background: #fff;
}
.task {
  height: 100%;
  padding: 16px 39px;
  border-radius: 10px 10px 0 0;
  background: #f4f4f4;
  font: 28px/38px "Open Sans", sans-serif;
}
.task-head {
  display: flex;
  align-items: center;
  gap: 34px;
  margin-bottom: 34px;
}
.task h2 {
  display: flex;
  flex-direction: column;
  margin: 0;
  color: #5fbf55;
  font-size: 30px;
  font-weight: 400;
  line-height: 40px;
}
.task p {
  height: 38px;
  margin: 0 0 39px;
}
.math {
  padding-left: 2px;
  font: 34px/34px "Liberation Serif", "Times New Roman", serif;
}
.var {
  padding: 0 2px;
  font-style: italic;
}
.sup {
  position: relative;
  bottom: 13px;
  font-size: 24px;
}
.op {
  padding: 0 10px;
  font-size: 44px;
  vertical-align: -3px;
}

.v-scroll {
  display: flex;
  flex: none;
  flex-direction: column;
  align-items: center;
  width: 21px;
  padding: 9px 0;
  background: #f0f0f0;
}
.track {
  flex: 1;
  width: 17px;
  padding-top: 315px;
}
.thumb {
  height: 18px;
  background: #c2c2c2;
}
.hide {
  position: absolute;
  top: 0;
  left: 50%;
  width: 108px;
  height: 26px;
  transform: translateX(-50%);
  border-bottom: 1px solid #999;
  border-radius: 0 0 8px 8px;
  background: #e8e8e8;
  color: #444;
  font: 20px/26px Roboto, sans-serif;
}
.key {
  position: absolute;
  top: 0;
  right: 50px;
  align-items: flex-start;
  width: 75px;
  height: 84px;
  padding-top: 17px;
  border-radius: 0 0 12px 12px;
  background: #60bc58;
  box-shadow: 0 2px 8px rgba(0, 0, 0, 0.4);
}

.h-scroll {
  display: flex;
  flex: none;
  align-items: center;
  height: 21px;
  padding-left: 8px;
  background: #f0f0f0;
}
.to-right {
  margin: 0 8px 0 auto;
}
.corner {
  align-self: stretch;
  width: 21px;
  background: #dadada;
}

.help {
  display: flex;
  flex: none;
  align-items: center;
  height: 39px;
  padding-left: 20px;
  border-top: 1px solid #bdbdbd;
  background: linear-gradient(#f7f7f7, #dcdcdc);
  color: #757575;
  font-size: 18px;
}
.help a {
  margin: 2px 11px 0 9px;
}

.taskbar {
  display: flex;
  flex: none;
  height: 50px;
  background: linear-gradient(90deg, #1b1f45 0%, #1b2142 10%, #1c2b3c 20%, #203337 32%, #20332f 48%, #1d3040 68%, #263836 80%, #273836 100%);
  color: #fff;
}
.sys {
  width: 60px;
}
.sys.wide {
  width: 79px;
}
.app {
  width: 62px;
}
.open {
  background: linear-gradient(#76b9ed, #76b9ed) bottom / 51px 3px no-repeat;
}
.selected {
  border-bottom: 3px solid #76b9ed;
  padding-top: 3px;
  background: #4a585f;
}
.tray {
  display: flex;
  margin-left: auto;
  font: 14px/22px "Noto Sans", sans-serif;
  white-space: nowrap;
}
.tray button {
  width: 40px;
}
.tray .lang {
  width: 44px;
}
.tray .clock {
  flex-direction: column;
  width: 88px;
  padding-top: 1px;
}
.tray .notice {
  position: relative;
  width: 59px;
  padding-right: 11px;
}
.notice-badge {
  position: absolute;
  right: 15px;
  bottom: 5px;
  width: 21px;
  height: 21px;
  border: 1px solid #9aa0a0;
  border-radius: 50%;
  background: #333b3b;
  line-height: 18px;
}
.desktop-edge {
  width: 6px;
  border-left: 1px solid #7b8786;
}
</style>
